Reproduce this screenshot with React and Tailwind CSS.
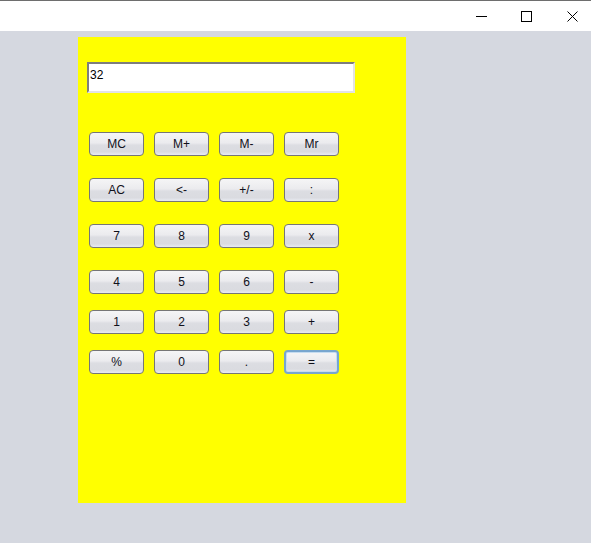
import React from 'react';

// Calculator rows; gap = space above the row
const rows = [
    { gap: 'mt-[39px]', keys: ['MC', 'M+', 'M-', 'Mr'] },
    { gap: 'mt-[22px]', keys: ['AC', '<-', '+/-', ':'] },
    { gap: 'mt-[22px]', keys: ['7', '8', '9', 'x'] },
    { gap: 'mt-[22px]', keys: ['4', '5', '6', '-'] },
    { gap: 'mt-[16px]', keys: ['1', '2', '3', '+'] },
    { gap: 'mt-[16px]', keys: ['%', '0', '.', '='] },
];

const Key = ({ label }) => {
    const focused = label === '=';
    return (
        <button
            className={`w-[55px] h-[24px] rounded-[4px] flex items-center justify-center text-[12px] text-[#10101a] leading-none
                ${focused
                    ? 'border-2 border-[#78a6cf] shadow-[inset_0_0_0_1px_#c6dcf0]'
                    : 'border border-[#767676]'
                }
                bg-[linear-gradient(to_bottom,#f5f5f6_0%,#ebebee_45%,#dcdde2_55%,#dadbe0_85%,#e9ebf2_100%)]`}
        >
            {label}
        </button>
    );
};

export default function App() {
    return (
        <div className="w-[591px] h-[543px] flex flex-col overflow-hidden" style={{ fontFamily: '"Liberation Sans", Arial, sans-serif' }}>
            {/* Window title bar */}
            <header className="h-[31px] shrink-0 bg-white border-t border-[#6e6e6e] flex justify-end items-start">
                <div className="w-[45px] h-[30px] flex items-center justify-center">
                    <svg width="11" height="11" viewBox="0 0 11 11"><path d="M0 5.5h11" stroke="#000" strokeWidth="1" /></svg>
                </div>
                <div className="w-[45px] h-[30px] mr-[5px] flex items-center justify-center">
                    <svg width="11" height="11" viewBox="0 0 11 11"><rect x="0.5" y="0.5" width="10" height="10" fill="none" stroke="#000" strokeWidth="1" /></svg>
                </div>
                <div className="w-[37px] h-[30px] flex items-center justify-center">
                    <svg width="11" height="11" viewBox="0 0 11 11"><path d="M0.5 0.5l10 10M10.5 0.5l-10 10" stroke="#000" strokeWidth="1" /></svg>
                </div>
            </header>

            {/* Frame content */}
            <main className="flex-1 bg-[#d5d8e0] pl-[78px] pt-[6px]">
                <div className="w-[328px] h-[466px] bg-[#ffff00] pl-[9px] pt-[25px]">
                    <div className="w-[268px] h-[31px] bg-white border-2 border-t-[#7d7d7d] border-l-[#7d7d7d] border-b-[#e3e3e3] border-r-[#e3e3e3] px-[1px] pt-[3px] text-[12px] text-black leading-[16px]">
                        32
                    </div>

                    <div className="pl-[2px]">
                        {rows.map((row, i) => (
                            <div key={i} className={`flex gap-[10px] ${row.gap}`}>
                                {row.keys.map(k => <Key key={k} label={k} />)}
                            </div>
                        ))}
                    </div>
                </div>
            </main>
        </div>
    );
}
